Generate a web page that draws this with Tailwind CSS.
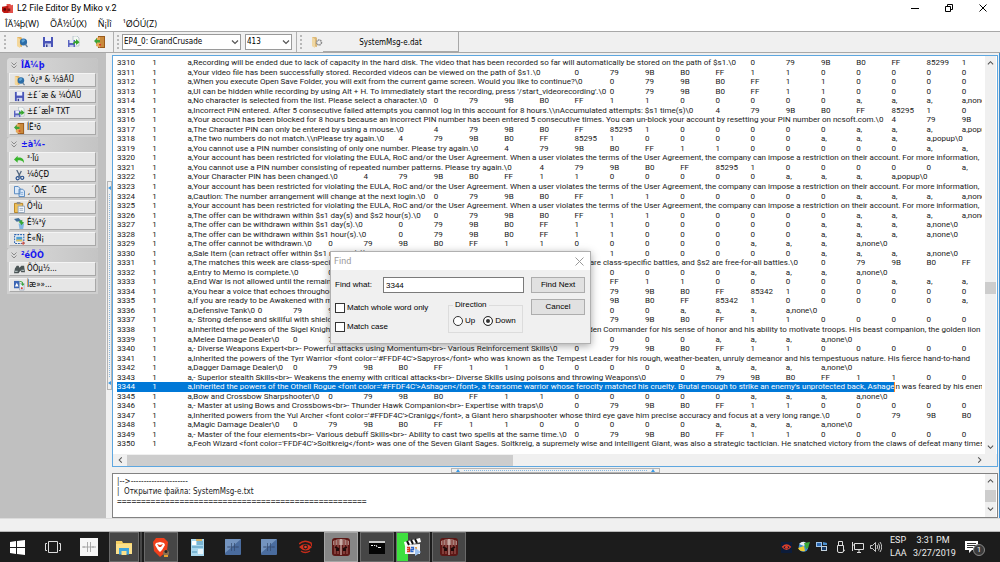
<!DOCTYPE html>
<html lang="en">
<head>
    <meta charset="UTF-8">
    <meta name="viewport" content="width=device-width, initial-scale=1.0">
    <title>L2 File Editor By Miko v.2</title>
    <script src="https://cdn.jsdelivr.net/npm/@tailwindcss/browser@4"></script>
</head>
<body class="h-screen overflow-hidden flex flex-col bg-[#f0f0f0] text-black text-[8px] leading-none font-['DejaVu_Sans_Condensed','DejaVu_Sans',sans-serif]">

    <!-- Shared icons -->
    <svg class="hidden">
        <symbol id="i-open" viewBox="0 0 12 12">
            <path d="M1 1h4l1 1v9l-5-1z" fill="#e3b566"/><path d="M1 1l3 2v9l-3-2z" fill="#f4d79b"/>
            <circle cx="7.5" cy="6" r="3.600" fill="#2c6da8"/><path d="M5.500 4.500c1-1.500 3-1.500 3.500-.5s-1 1-1.500 2-2 .5-2-1.500z" fill="#5fa6d8"/><path d="M9.500 8.500l2 2.500" stroke="#6b7f93" stroke-width="1.300"/>
        </symbol>
        <symbol id="i-save" viewBox="0 0 12 12">
            <path d="M1 1h10v10H1z" fill="#4a55b8"/><path d="M3 1h6v4H3z" fill="#eef0fb"/><path d="M3 7.500h6V11H3z" fill="#cfd4ee"/><path d="M4 8.500h1.500V11H4z" fill="#3a438f"/>
        </symbol>
        <symbol id="i-saveas" viewBox="0 0 12 12">
            <path d="M5 0h4l2 2v8H5z" fill="#f4f8f4" stroke="#8ea0b0" stroke-width=".5"/><path d="M0 4h7v7H0z" fill="#5a64c0"/><path d="M1.500 4h4v3h-4z" fill="#e6e9fa"/><path d="M1.500 9h4v2h-4z" fill="#c3c9ea"/>
            <path d="M5 9c0-3 1-4 3-4V3l3.500 3.200L8 9V7C6.500 7 6 8 5 9z" fill="#35a52c"/>
        </symbol>
        <symbol id="i-exit" viewBox="0 0 12 12">
            <path d="M4 0h7v12H4z" fill="#9a5a1c"/><path d="M5 1h5v10H5z" fill="#c98a3c"/><path d="M2 2l4-1v10.500L2 10z" fill="#e7a95a"/>
            <path d="M0 5l3-3v2h3v2.500H3V8z" fill="#3da338"/><path d="M5 8h2v1.500H5z" fill="#d8342a"/>
        </symbol>
        <symbol id="i-chev" viewBox="0 0 8 6">
            <path d="M1 1.500l3 3 3-3" fill="none" stroke="currentColor" stroke-width="1.200"/>
        </symbol>
        <symbol id="i-dbl" viewBox="0 0 6 7">
            <path d="M.5.500L3 3 5.500.500M.5 3.500L3 6l2.500-2.500" fill="none" stroke="#8a8a8a" stroke-width="1"/>
        </symbol>
        <symbol id="i-plate" viewBox="0 0 16 16">
            <rect width="16" height="16" rx="1" fill="#4a6c9e"/><path d="M0 0h16L0 14z" fill="#86a5cd" opacity=".7"/><path d="M2 8h12M6.500 4v8M9.500 4v8M4 7.500v1M12 7.500v1" stroke="#34496a" stroke-width=".7" fill="none"/>
        </symbol>
        <symbol id="i-l2" viewBox="0 0 18 18">
            <rect width="18" height="18" rx="3" fill="#5d1715"/><path d="M1 3q8-4 16 0v4H1z" fill="#a8837e"/><path d="M3 2v14M6 2v14M12 2v14M15 2v14" stroke="#8d4b45" stroke-width="1.500"/><path d="M9 1v16" stroke="#ead6d0" stroke-width="1"/><path d="M3 9l4 2M11 11l4-2M4 12h3M11 12h3" stroke="#1e0b0a" stroke-width="1.800"/>
        </symbol>
    </svg>

    <!-- Title bar -->
    <header class="h-4 shrink-0 bg-white flex items-center pl-[2px] font-[Roboto,sans-serif]">
        <svg class="w-[11px] h-[11px]" viewBox="0 0 12 12"><path d="M5 1h4l1 1.500 2-.5v9H5z" fill="#e2504a"/><path d="M0 4l7-1v8H2L0 9z" fill="#c01812"/><circle cx="3" cy="7" r="1.500" fill="#5c0705"/><path d="M6 6h3v3H6z" fill="#7f1410"/></svg>
        <h1 class="ml-1 text-[9px]">L2 File Editor By Miko v.2</h1>
        <div class="ml-auto flex text-black">
            <button aria-label="Minimize" class="w-[34px] h-4 flex items-center justify-center"><svg class="w-2 h-2" viewBox="0 0 8 8"><path d="M0 4.500h8" stroke="currentColor"/></svg></button>
            <button aria-label="Restore" class="w-[34px] h-4 flex items-center justify-center"><svg class="w-2 h-2" viewBox="0 0 8 8"><path d="M.5 2.500h5v5h-5zM2.500 2.500v-2h5v5h-2" fill="none" stroke="currentColor"/></svg></button>
            <button aria-label="Close" class="w-[34px] h-4 flex items-center justify-center"><svg class="w-2 h-2" viewBox="0 0 8 8"><path d="M.5.500l7 7M7.500.500l-7 7" stroke="currentColor"/></svg></button>
        </div>
    </header>

    <!-- Menu -->
    <nav class="h-[15px] shrink-0 bg-white flex items-center gap-[11px] pl-[5px] font-['Open_Sans',sans-serif] text-[9px]">
        <button>ÎÄ¼þ(W)</button>
        <button>ÕÂ½Ú(X)</button>
        <button>Ñ¡Ïî</button>
        <button>¹ØÓÚ(Z)</button>
    </nav>

    <!-- Toolbar -->
    <div class="h-[22px] shrink-0 bg-[#f0f0f0] border-y border-[#a8a8a8] flex items-center">
        <div class="ml-1 h-[14px] border-l-2 border-dotted border-[#b8b8b8]"></div>
        <div class="flex gap-[14px] ml-[10px]">
            <button aria-label="Open"><svg class="w-3 h-3"><use href="#i-open"/></svg></button>
            <button aria-label="Save"><svg class="w-3 h-3"><use href="#i-save"/></svg></button>
            <button aria-label="Save as"><svg class="w-3 h-3"><use href="#i-saveas"/></svg></button>
            <button aria-label="Exit"><svg class="w-3 h-3"><use href="#i-exit"/></svg></button>
        </div>
        <div class="ml-[7px] h-5 border-l border-[#b0b0b0]"></div>
        <div class="ml-[3px] h-[14px] border-l-2 border-dotted border-[#b8b8b8]"></div>
        <div class="relative ml-[3px] w-[119px]">
            <select aria-label="Chronicle" class="appearance-none block w-full h-4 bg-white border border-[#9a9a9a] pl-px leading-[14px]">
                <option>EP4_0: GrandCrusade</option>
            </select>
            <svg class="absolute right-[2px] top-[5px] w-2 h-[6px] text-[#555] pointer-events-none"><use href="#i-chev"/></svg>
        </div>
        <div class="relative ml-1 w-[47px]">
            <select aria-label="Protocol" class="appearance-none block w-full h-4 bg-white border border-[#9a9a9a] pl-px leading-[14px]">
                <option>413</option>
            </select>
            <svg class="absolute right-[2px] top-[5px] w-2 h-[6px] text-[#555] pointer-events-none"><use href="#i-chev"/></svg>
        </div>
        <div class="ml-[4px] h-5 border-l border-[#b0b0b0]"></div>
        <div class="ml-[3px] h-[14px] border-l-2 border-dotted border-[#b8b8b8]"></div>
        <button aria-label="File settings" class="ml-[9px]"><svg class="w-3 h-3" viewBox="0 0 12 12"><path d="M1 1h4l1 1v9l-5-1z" fill="#dcb878"/><path d="M1 1l3 2v9l-3-2z" fill="#f0d8a4"/><circle cx="8" cy="6.500" r="2.500" fill="#eee" stroke="#8c8c8c" stroke-width="1.500" stroke-dasharray="1.500 .6"/></svg></button>
        <button class="w-[136px] h-5 border-r border-b border-[#a8a8a8] flex items-center justify-center pt-[2px]">SystemMsg-e.dat</button>
    </div>

    <main class="flex-1 min-h-0 flex">
        <!-- Task panel -->
        <aside class="w-[106px] shrink-0 bg-[#c0c0c0] pl-[7px] pr-2 pt-[5px]">
            <section class="bg-[#cfcfcf] rounded-t pb-[2px]">
                <h2 class="h-[15px] flex items-center gap-1 pl-1 rounded-t bg-linear-to-r from-[#dadada] to-[#c4c4c4] text-[#1616f0] font-bold text-[9px]"><svg class="w-[6px] h-[7px]"><use href="#i-dbl"/></svg>ÎÄ¼þ</h2>
                <div class="flex flex-col gap-[2px] px-[2px]">
                    <button class="h-[14px] flex items-center gap-[2px] pl-1 bg-[#e6e6e6] border border-[#f4f4f4] border-b-[#a8a8a8] border-r-[#a8a8a8]"><svg class="w-[11px] h-[11px]"><use href="#i-open"/></svg>´ò¿ª &amp; ½âÃÜ</button>
                    <button class="h-[14px] flex items-center gap-[2px] pl-1 bg-[#e6e6e6] border border-[#f4f4f4] border-b-[#a8a8a8] border-r-[#a8a8a8]"><svg class="w-[11px] h-[11px]"><use href="#i-save"/></svg>±£´æ &amp; ¼ÓÃÜ</button>
                    <button class="h-[14px] flex items-center gap-[2px] pl-1 bg-[#e6e6e6] border border-[#f4f4f4] border-b-[#a8a8a8] border-r-[#a8a8a8]"><svg class="w-[11px] h-[11px]"><use href="#i-saveas"/></svg>±£´æÎª TXT</button>
                    <button class="h-[14px] flex items-center gap-[2px] pl-1 bg-[#e6e6e6] border border-[#f4f4f4] border-b-[#a8a8a8] border-r-[#a8a8a8]"><svg class="w-[11px] h-[11px]"><use href="#i-exit"/></svg>ÍË³ö</button>
                </div>
            </section>
            <section class="bg-[#cfcfcf] rounded-t pb-[2px]">
                <h2 class="h-[15px] flex items-center gap-1 pl-1 rounded-t bg-linear-to-r from-[#dadada] to-[#c4c4c4] text-[#1616f0] font-bold text-[9px]"><svg class="w-[6px] h-[7px]"><use href="#i-dbl"/></svg>±à¼-</h2>
                <div class="flex flex-col gap-[2px] px-[2px]">
                    <button class="h-[14px] flex items-center gap-[2px] pl-1 bg-[#e6e6e6] border border-[#f4f4f4] border-b-[#a8a8a8] border-r-[#a8a8a8]"><svg class="w-[11px] h-[11px]" viewBox="0 0 12 12"><path d="M0 6l4-4v2c4-.5 7 1 7 6-1.500-3-4-3.500-7-3v2.500z" fill="#38b52c"/></svg>³·Ïú</button>
                    <button class="h-[14px] flex items-center gap-[2px] pl-1 bg-[#e6e6e6] border border-[#f4f4f4] border-b-[#a8a8a8] border-r-[#a8a8a8]"><svg class="w-[11px] h-[11px]" viewBox="0 0 12 12"><path d="M3 0l4 8M8 1L5 7" stroke="#51657f" stroke-width="1.400"/><circle cx="4" cy="9" r="1.700" fill="none" stroke="#28508e" stroke-width="1.300"/><circle cx="9" cy="8.500" r="1.700" fill="none" stroke="#28508e" stroke-width="1.300"/></svg>¼ôÇÐ</button>
                    <button class="h-[14px] flex items-center gap-[2px] pl-1 bg-[#e6e6e6] border border-[#f4f4f4] border-b-[#a8a8a8] border-r-[#a8a8a8]"><svg class="w-[11px] h-[11px]" viewBox="0 0 12 12"><path d="M.5.500h4l2 2v6h-6zM5.500 3.500h4l2 2v6h-6z" fill="#dbe9f9" stroke="#4f83bd"/><path d="M7 7h3M7 9h3" stroke="#7fa9d6"/></svg>¸´ÖÆ</button>
                    <button class="h-[14px] flex items-center gap-[2px] pl-1 bg-[#e6e6e6] border border-[#f4f4f4] border-b-[#a8a8a8] border-r-[#a8a8a8]"><svg class="w-[11px] h-[11px]" viewBox="0 0 12 12"><path d="M.5 1.500h9v10h-9z" fill="#eebf57" stroke="#b27f1d"/><path d="M3 0h4v2.500H3z" fill="#8e8e8e"/><path d="M4.500 4.500h7v7h-7z" fill="#f5f8fd" stroke="#8da3bd"/><path d="M6 7h4M6 9h4" stroke="#9ab"/></svg>Õ³Ìù</button>
                    <button class="h-[14px] flex items-center gap-[2px] pl-1 bg-[#e6e6e6] border border-[#f4f4f4] border-b-[#a8a8a8] border-r-[#a8a8a8]"><svg class="w-[11px] h-[11px]" viewBox="0 0 12 12"><path d="M0 1l5-1 3 3-5 1z" fill="#3f6f98"/><path d="M5 6h6l-1 6H6z" fill="#7fb6e2"/><path d="M5 4l4-2v2l2 1-3 3-1-2z" fill="#35a737"/></svg>É¾³ý</button>
                    <button class="h-[14px] flex items-center gap-[2px] pl-1 bg-[#e6e6e6] border border-[#f4f4f4] border-b-[#a8a8a8] border-r-[#a8a8a8]"><svg class="w-[11px] h-[11px]" viewBox="0 0 12 12"><path d="M.7.700h10v9.600h-10z" fill="#f4f4f4" stroke="#2b63ae" stroke-width="1.200" stroke-dasharray="2 1"/><path d="M2.500 3h6.500v5H2.500z" fill="#4d9fd6"/><path d="M2.500 6h6.500v2H2.500z" fill="#e0c25a"/><path d="M10 8v4M8 10h4" stroke="#e04a32"/></svg>È«Ñ¡</button>
                </div>
            </section>
            <section class="bg-[#cfcfcf] rounded-t pb-[2px]">
                <h2 class="h-[14px] flex items-center gap-1 pl-1 rounded-t bg-linear-to-r from-[#dadada] to-[#c4c4c4] text-[#1616f0] font-bold text-[9px]"><svg class="w-[6px] h-[7px]"><use href="#i-dbl"/></svg>²éÕÒ</h2>
                <div class="flex flex-col gap-[2px] px-[2px]">
                    <button class="h-[14px] flex items-center gap-[2px] pl-1 bg-[#e6e6e6] border border-[#f4f4f4] border-b-[#a8a8a8] border-r-[#a8a8a8]"><svg class="w-[11px] h-[11px]" viewBox="0 0 12 12"><path d="M3 2h2l1 2 2-2h3l1 7H8L7 7l-2 3H0l1-5z" fill="#4b5556"/><path d="M1 8h3M8 7h3" stroke="#a9b4b5" stroke-width="1.500"/></svg>ÕÒµ½...</button>
                    <button class="h-[14px] flex items-center gap-[2px] pl-1 bg-[#e6e6e6] border border-[#f4f4f4] border-b-[#a8a8a8] border-r-[#a8a8a8]"><svg class="w-[11px] h-[11px]" viewBox="0 0 12 12"><path d="M0 1h6v8H0z" fill="#3c66b4"/><path d="M3 3l2 4H1z" fill="#fff"/><path d="M6 4h5v7H6z" fill="#e6eef7" stroke="#7e92ab" stroke-width=".6"/><path d="M6 1c3 0 4 1 4 3h1.500L9.500 6.500 7.500 4H9c0-1-1-2-3-2z" fill="#36a536"/><path d="M7.500 8h2v2h-2z" fill="#d34235"/></svg>Ìæ»»...</button>
                </div>
            </section>
        </aside>

        <!-- Vertical splitter -->
        <div class="w-[6px] shrink-0 flex flex-col justify-center items-center">
            <div class="w-[5px] h-[209px] border border-[#b4b4b4] flex flex-col items-center justify-between py-1">
                <span class="border-y-2 border-y-transparent border-r-[3px] border-r-[#3a9be8]"></span>
                <span class="flex-1 my-1 border-l border-dotted border-[#8bb9e0]"></span>
                <span class="border-y-2 border-y-transparent border-r-[3px] border-r-[#3a9be8]"></span>
            </div>
        </div>

        <div class="flex-1 min-w-0 flex flex-col pt-[2px] pr-[1px] border-r border-[#3f8fd0]">
            <!-- Editor -->
            <div class="flex-1 min-h-0 flex flex-col bg-white border border-[#5ea7e0]">
                <div class="flex-1 min-h-0 flex">
                    <div class="flex-1 min-w-0 pl-1 pr-[3px]">
                        <div id="lines" class="h-full overflow-hidden pt-[2px] pb-[5px] grid auto-rows-fr text-[#1a1a1a] font-[Roboto,sans-serif]"></div>
                    </div>
                    <div class="w-[11px] mr-px shrink-0 bg-[#f0f0f0] flex flex-col items-center py-1 text-[#505050]">
                        <svg class="w-[7px] h-[6px] rotate-180"><use href="#i-chev"/></svg>
                        <div class="flex-[217]"></div>
                        <div class="w-full h-3 bg-[#cdcdcd]"></div>
                        <div class="flex-[151]"></div>
                        <svg class="w-[7px] h-[6px]"><use href="#i-chev"/></svg>
                    </div>
                </div>
                <div class="h-3 shrink-0 bg-[#f0f0f0] flex items-center pl-1 pr-[14px] text-[#505050]">
                    <svg class="w-[7px] h-[6px] rotate-90"><use href="#i-chev"/></svg>
                    <div class="ml-[3px] flex-1 h-[11px]"><div class="w-5/11 h-full bg-[#cdcdcd]"></div></div>
                    <svg class="w-[7px] h-[6px] -rotate-90"><use href="#i-chev"/></svg>
                </div>
            </div>

            <!-- Horizontal splitter -->
            <div class="h-[6px] shrink-0 flex justify-center items-center">
                <div class="w-[209px] h-[5px] border border-[#b4b4b4] flex items-center justify-between px-1">
                    <span class="border-x-2 border-x-transparent border-b-[3px] border-b-[#3a9be8]"></span>
                    <span class="flex-1 mx-1 border-t border-dotted border-[#8bb9e0]"></span>
                    <span class="border-x-2 border-x-transparent border-b-[3px] border-b-[#3a9be8]"></span>
                </div>
            </div>

            <!-- Log -->
            <div class="h-[45px] shrink-0 bg-white border border-[#828282] flex">
                <pre class="flex-1 min-w-0 overflow-hidden pl-1 pt-[3px] leading-[10px] font-['DejaVu_Sans_Condensed','DejaVu_Sans',sans-serif] text-[#1a1a1a]">|--&gt;----------------------
|  Открытие файла: SystemMsg-e.txt
<span class="font-['Liberation_Mono',monospace] font-bold text-[#444]">====================================================</span></pre>
                <div class="w-[11px] mr-px shrink-0 bg-[#f0f0f0] flex flex-col items-center py-1 text-[#505050]">
                    <svg class="w-[7px] h-[6px] rotate-180"><use href="#i-chev"/></svg>
                    <div class="mt-[6px] w-full h-3 bg-[#cdcdcd]"></div>
                    <svg class="mt-1 w-[7px] h-[6px]"><use href="#i-chev"/></svg>
                </div>
            </div>
        </div>
    </main>

    <!-- Status bar -->
    <div class="h-[14px] shrink-0 border-t border-b border-t-[#dcdcdc] border-b-[#b8b8b8]"></div>

    <!-- Windows taskbar -->
    <footer class="h-[30px] shrink-0 bg-[#1c1c1c] text-[#eee] flex items-center font-[Roboto,sans-serif]">
        <button aria-label="Start" class="w-[35px] h-full flex items-center justify-center"><svg class="w-[15px] h-[15px]" viewBox="0 0 15 15"><path d="M0 2l6-1v6H0zM7 1l8-1v7H7zM0 8h6v6l-6-1zM7 8h8v7l-8-1z" fill="#fff"/></svg></button>
        <button aria-label="Task view" class="w-9 h-full flex items-center justify-center"><svg class="w-4 h-3" viewBox="0 0 16 12"><path d="M3.500.500h9v11h-9zM2 2.500H.5v7H2M14 2.500h1.500v7H14" fill="none" stroke="#ddd"/></svg></button>
        <button aria-label="Launcher" class="w-9 h-full flex items-center justify-center"><svg class="w-[18px] h-[18px]" viewBox="0 0 18 18"><path d="M0 0h18v18H0z" fill="#f6f6f6"/><path d="M2 9h14M7.500 4v10M10.500 4v10M4 8v2M13 8v2" stroke="#999" stroke-width=".8" fill="none"/></svg></button>
        <div class="w-9 h-full flex gap-[1px] pl-[2px] pr-[1px]">
            <button aria-label="File Explorer" class="flex-1 h-full bg-[#464646] border border-[#6a6a6a] flex items-center justify-center"><svg class="w-4 h-[15px]" viewBox="0 0 16 15"><path d="M0 1h6l1 2h9v11H0z" fill="#f5cf63"/><path d="M0 4h16v10H0z" fill="#fbe08a"/><path d="M3 8h10v6.500H3z" fill="#3fa3dc"/><path d="M5.500 11h5v4h-5z" fill="#fbe08a"/></svg></button>
            <span class="w-[2px] h-full bg-[#464646]"></span>
        </div>
        <button aria-label="Brave" class="w-[34px] mx-[1px] h-full bg-[#464646] border border-[#6a6a6a] flex items-center justify-center"><svg class="w-[18px] h-[19px]" viewBox="0 0 18 19"><path d="M4 0h8l4 4-1 9-7 6-6-6L1 4z" fill="#f0401c"/><path d="M4 5l4-1 4 1 1 2-3 5-2 2-2-2-3-5z" fill="#fff"/><path d="M5 6l3 1 3-1-2 3H7z" fill="#f0401c"/><circle cx="14" cy="15" r="3" fill="#8c7050"/><circle cx="14" cy="13.500" r="1.500" fill="#222"/><path d="M12 17h4v2h-4z" fill="#e6a02e"/></svg></button>
        <button aria-label="Notes" class="w-9 h-full flex items-center justify-center"><svg class="w-[13px] h-[17px]" viewBox="0 0 13 17"><path d="M0 0h13v17H0z" fill="#a9d8ef"/><path d="M1 2h4v4H1z" fill="#fff"/><path d="M6 3h6M6 5h6M1 8h11M1 13h5" stroke="#4d93b8"/><path d="M7 10h5v5H7z" fill="#e9f5fb"/><path d="M5 1h6" stroke="#e0a53a" stroke-width="1.500"/></svg></button>
        <button aria-label="L2 tool" class="w-9 h-full flex items-center justify-center"><svg class="w-4 h-4"><use href="#i-plate"/></svg></button>
        <button aria-label="L2 tool" class="w-9 h-full flex items-center justify-center"><svg class="w-4 h-4"><use href="#i-plate"/></svg></button>
        <button aria-label="Eye" class="w-9 h-full flex items-center justify-center"><svg class="w-[13px] h-[14px]" viewBox="0 0 13 14"><path d="M0 4q5-5 12-1l1 3" fill="none" stroke="#c52c1a" stroke-width="1.500"/><path d="M0 7q6-6 13 0-6 7-13 0z" fill="#d5301c"/><circle cx="6.500" cy="7" r="2.400" fill="#1c1c1c"/><circle cx="6.500" cy="7" r="1.300" fill="#e5402a"/><path d="M2 11q4 3 9 0" fill="none" stroke="#c52c1a" stroke-width="1.400"/></svg></button>
        <button aria-label="L2 File Editor" class="w-[34px] mx-[1px] h-full bg-[#868686] border border-[#a6a6a6] flex items-center justify-center"><svg class="w-[18px] h-[18px]"><use href="#i-l2"/></svg></button>
        <button aria-label="Command Prompt" class="w-[34px] mx-[1px] h-full bg-[#464646] border border-[#6a6a6a] flex items-center justify-center"><svg class="w-4 h-[13px]" viewBox="0 0 16 13"><path d="M0 0h16v13H0z" fill="#050505"/><path d="M0 0h16v2H0z" fill="#c9c9c9"/><path d="M2 4.500h2M5 4.500h1M7 4l1 2M9 6.500h3" stroke="#eee"/></svg></button>
        <button aria-label="Media Player Classic" class="w-[34px] mx-[1px] h-full bg-linear-to-r from-[#3fe03f] from-35% to-[#464646] to-35% border border-[#6a6a6a] flex items-center justify-center"><svg class="w-[18px] h-[18px]" viewBox="0 0 18 18"><path d="M1 7l15-1v10H1z" fill="#f4f4f4"/><path d="M0 4l16-4 1 4L1 8z" fill="#fff"/><path d="M3 3l2 4M7 2l2 4M11 1l2 4" stroke="#111" stroke-width="2"/><path d="M3 9.500h2.500v4H3M3 11.500h2" stroke="#d8361f" fill="none" stroke-width="1.300"/><path d="M7 9.500h2.500v2H7v2h2.500" stroke="#2b63c8" fill="none" stroke-width="1.300"/><path d="M12 9v5" stroke="#e08a1a" stroke-width="1.500"/><path d="M11 10l6 4-6 4z" fill="#9cc0ee"/></svg></button>
        <button aria-label="L2 game" class="w-[34px] mx-[1px] h-full bg-[#464646] border border-[#6a6a6a] flex items-center justify-center"><svg class="w-[18px] h-[18px]"><use href="#i-l2"/></svg></button>

        <div class="ml-auto flex items-center gap-[6px]">
            <svg class="w-[11px] h-[11px]" viewBox="0 0 11 11"><path d="M0 0h11v11H0z" fill="#0c1c3a"/><path d="M1.500 5q4-4 8 0-4 5-8 0z" fill="none" stroke="#e0402a" stroke-width="1.200"/><circle cx="5.500" cy="5.300" r="1.500" fill="#e0402a"/></svg>
            <svg class="w-3 h-3" viewBox="0 0 12 12"><circle cx="5.500" cy="6" r="4.800" fill="#3d8ed0"/><path d="M1 3q4-4 7-1L6 5z" fill="#e9eef2"/><path d="M0 7l6-2 1 5q-5 1-7-3z" fill="#f1ce33"/><path d="M6 2l6-1-2 6-2 1z" fill="#3aa839"/></svg>
            <svg class="w-3 h-3" viewBox="0 0 12 12"><path d="M0 1h6v5H0z" fill="#9fc4e8"/><path d="M1 2h4v3H1z" fill="#2a66b0"/><path d="M5 5h6v5H5z" fill="#c2d0dc"/><path d="M6 6h4v3H6z" fill="#173a66"/><path d="M7 1l4 1v2H7z" fill="#4b90d0"/></svg>
            <svg class="w-3 h-3" viewBox="0 0 12 12"><path d="M4.500 4V.500h4V4M3.500 4.500h6V10q0 1.500-1.500 1.500H5q-1.500 0-1.500-1.500zM9 10l2-1" fill="none" stroke="#ddd"/></svg>
            <svg class="w-3 h-3" viewBox="0 0 12 12"><path d="M2.500 2.500h9v6h-9zM5 11.500h4M7 9v2M.5 1v3h2M.5 4v6" fill="none" stroke="#ddd"/></svg>
            <svg class="w-3 h-3" viewBox="0 0 12 12"><path d="M.5 4.500h2l3-3v9l-3-3h-2zM7 4q1.500 2 0 4M8.500 2.500q2.500 3.500 0 7M10 1q3.500 5 0 10" fill="none" stroke="#ddd" stroke-width=".9"/></svg>
            <div class="ml-[2px] w-4 text-center text-[9px] leading-[13px]">ESP<br>LAA</div>
            <div class="ml-[1px] w-10 text-center text-[9px] leading-[13px] whitespace-nowrap">3:31 PM<br>3/27/2019</div>
            <button aria-label="Notifications" class="relative ml-[6px] mr-[15px] w-5 h-[18px]">
                <svg class="w-[13px] h-3" viewBox="0 0 13 12"><path d="M0 0h13v9H7l-3 3V9H0z" fill="#fff"/><path d="M2 2.500h9M2 4.500h9M2 6.500h6" stroke="#333"/></svg>
                <span class="absolute right-0 bottom-0 w-3 h-3 rounded-full bg-[#3a3a3a] border border-[#8a8a8a] flex items-center justify-center">1</span>
            </button>
        </div>
    </footer>

    <!-- Find dialog -->
    <form class="absolute left-[330px] top-[251px] w-[261px] bg-[#f0f0f0] border border-[#b0b0b0] shadow-[0_2px_8px_rgba(0,0,0,0.35)] font-['Liberation_Sans',sans-serif]">
        <div class="h-[18px] bg-white flex items-center justify-between pl-[3px] pr-[6px] text-[#9a9a9a] text-[9px] font-[Roboto,sans-serif]">
            Find
            <button type="button" aria-label="Close dialog"><svg class="w-[9px] h-[9px]" viewBox="0 0 9 9"><path d="M.5.500l8 8M8.500.500l-8 8" stroke="#999"/></svg></button>
        </div>
        <div class="flex pl-1 pr-[5px] pt-[7px] pb-[10px]">
            <div class="flex-1">
                <div class="flex items-center">
                    <label for="what" class="w-[48px]">Find what:</label>
                    <input id="what" type="text" value="3344" class="w-[141px] h-4 bg-white border border-[#7a7a7a] pl-[2px]">
                </div>
                <div class="flex justify-between mr-[8px] mt-2">
                    <div class="flex flex-col gap-[9px] pt-[2px]">
                        <label class="flex items-center gap-[2px]"><input type="checkbox" class="appearance-none w-[10px] h-[10px] bg-white border border-[#333]">Match whole word only</label>
                        <label class="flex items-center gap-[2px]"><input type="checkbox" class="appearance-none w-[10px] h-[10px] bg-white border border-[#333]">Match case</label>
                    </div>
                    <fieldset class="w-[75px] h-8 border border-[#dcdcdc] flex pl-1">
                        <legend class="px-[2px]">Direction</legend>
                        <div class="flex items-center gap-2">
                            <label class="flex items-center gap-[2px]"><input type="radio" name="dir" class="appearance-none w-[10px] h-[10px] rounded-full bg-white border border-[#333] checked:bg-[#333] checked:shadow-[inset_0_0_0_2px_white]">Up</label>
                            <label class="flex items-center gap-[2px]"><input type="radio" name="dir" checked class="appearance-none w-[10px] h-[10px] rounded-full bg-white border border-[#333] checked:bg-[#333] checked:shadow-[inset_0_0_0_2px_white]">Down</label>
                        </div>
                    </fieldset>
                </div>
            </div>
            <div class="w-[54px] flex flex-col gap-[6px]">
                <button type="button" class="h-4 bg-[#e1e1e1] border border-[#adadad]">Find Next</button>
                <button type="button" class="h-4 bg-[#e1e1e1] border border-[#adadad]">Cancel</button>
            </div>
        </div>
    </form>

    <script>
        // line text, tab column of the first value, values
        const NONE = '0 79 9B B0 FF 1 1 0 0 0 0 0 a, a, a, a,none\\0';
        const POPUP = '4 79 9B B0 FF 85295 1 0 0 0 0 0 a, a, a, a,popup\\0';
        const SHORT_POPUP = '4 79 9B B0 FF 1 1 0 0 0 0 0 a, a, a, a,popup\\0';
        const VOICE = '0 79 9B B0 FF 85342 1 0 0 0 0 0 a, a, a, a,none\\0';
        const EULA = 'Your account has been restricted for violating the EULA, RoC and/or the User Agreement. When a user violates the terms of the User Agreement, the company can impose a restriction on their account. For more information,';

        const rows = [
            ['Recording will be ended due to lack of capacity in the hard disk. The video that has been recorded so far will automatically be stored on the path of $s1.\\0', 18, '0 79 9B B0 FF 85299 1'],
            ['Your video file has been successfully stored. Recorded videos can be viewed on the path of $s1.\\0', 13, NONE],
            ['When you execute Open Save Folder, you will exit from the current game screen. Would you like to continue?\\0', 14, NONE],
            ["UI can be hidden while recording by using Alt + H. To immediately start the recording, press '/start_videorecording'.\\0", 14, NONE],
            ['No character is selected from the list. Please select a character.\\0', 9, NONE],
            ['Incorrect PIN entered. After 5 consecutive failed attempts you cannot log in this account for 8 hours.\\\\nAccumulated attempts: $s1 time(s)\\0', 17, POPUP],
            ['Your account has been blocked for 8 hours because an incorrect PIN number has been entered 5 consecutive times. You can un-block your account by resetting your PIN number on ncsoft.com.\\0', 22, POPUP],
            ['The Character PIN can only be entered by using a mouse.\\0', 9, POPUP],
            ['The two numbers do not match.\\\\nPlease try again.\\0', 8, POPUP],
            ['You cannot use a PIN number consisting of only one number. Please try again.\\0', 11, SHORT_POPUP],
            [EULA],
            ['You cannot use a PIN number consisting of repeated number patterns. Please try again.\\0', 12, POPUP],
            ['Your Character PIN has been changed.\\0', 7, SHORT_POPUP],
            [EULA],
            ['Caution: The number arrangement will change at the next login.\\0', 9, NONE],
            [EULA],
            ['The offer can be withdrawn within $s1 day(s) and $s2 hour(s).\\0', 9, NONE],
            ['The offer can be withdrawn within $s1 day(s).\\0', 8, NONE],
            ['The offer can be withdrawn within $s1 hour(s).\\0', 8, NONE],
            ['The offer cannot be withdrawn.\\0', 6, NONE],
            ['Sale Item (can retract offer within $s1 minute(s))\\0', 8, NONE],
            ['The matches this week are class-specific battles. The matches in week number $s1 of this current game month are class-specific battles, and $s2 are free-for-all battles.\\0', 20, NONE],
            ['Entry to Memo is complete.\\0', 6, NONE],
            ['End War is not allowed until the remaining time is over.\\0', 10, NONE],
            ['You hear a voice that echoes throughout the world.\\0', 13, VOICE],
            ['If you are ready to be Awakened with me, come to me.\\0', 12, VOICE],
            ['Defensive Tank\\0', 4, NONE],
            ['- Strong defense and skillful with shields<br>- Protects allies\\0', 13, NONE],
            ["Inherited the powers of the Sigel Knight <font color='#FFDF4C'>Abelius</font>, who was long praised as the Golden Commander for his sense of honor and his ability to motivate troops. His beast companion, the golden lion Kelcion"],
            ['Melee Damage Dealer\\0', 5, NONE],
            ['- Diverse Weapons Expert<br>- Powerful attacks using Momentum<br>- Various Reinforcement Skills\\0', 13, NONE],
            ["Inherited the powers of the Tyrr Warrior <font color='#FFDF4C'>Sapyros</font> who was known as the Tempest Leader for his rough, weather-beaten, unruly demeanor and his tempestuous nature. His fierce hand-to-hand"],
            ['Dagger Damage Dealer\\0', 5, NONE],
            ['- Superior stealth Skills<br>- Weakens the enemy with critical attacks<br>- Diverse Skills using poisons and throwing Weapons\\0', 16, NONE],
            ["Inherited the powers of the Othell Rogue <font color='#FFDF4C'>Ashagen</font>, a fearsome warrior whose ferocity matched his cruelty. Brutal enough to strike an enemy's unprotected back, Ashage|n was feared by his enemies"],
            ['Bow and Crossbow Sharpshooter\\0', 6, NONE],
            ['- Master at using Bows and Crossbows<br>- Thunder Hawk Companion<br>- Expertise with traps\\0', 13, NONE],
            ["Inherited powers from the Yul Archer <font color='#FFDF4C'>Cranigg</font>, a Giant hero sharpshooter whose third eye gave him precise accuracy and focus at a very long range.\\0", 21, NONE],
            ['Magic Damage Dealer\\0', 5, NONE],
            ['- Master of the four elements<br>- Various debuff Skills<br>- Ability to cast two spells at the same time.\\0', 13, NONE],
            ["Feoh Wizard <font color='FFDF4C'>Soltkreig</font> was one of the Seven Giant Sages. Soltkreig, a supremely wise and intelligent Giant, was also a strategic tactician. He snatched victory from the claws of defeat many times"]
        ];

        const COLUMNS = 25;
        const selectedId = 3344;
        const lines = document.getElementById('lines');

        function addCell(row, text, column, classes) {
            const cell = document.createElement('span');
            cell.className = classes;
            cell.style.gridColumnStart = column + 1;
            cell.textContent = text;
            row.appendChild(cell);
            return cell;
        }

        rows.forEach(([text, start, values], i) => {
            const id = 3310 + i;
            const selected = id === selectedId;
            const row = document.createElement('div');
            row.className = 'w-[880px] min-h-0 grid grid-cols-25 grid-rows-1 whitespace-nowrap leading-[9px]';
            const fill = selected ? 'row-start-1 bg-[#0078d7] text-white' : 'row-start-1';
            addCell(row, id, 0, fill);
            addCell(row, '1', 1, fill);
            const [marked, rest] = text.split('|');
            const body = addCell(row, '', 2, 'row-start-1 w-0 flex');
            const head = document.createElement('span');
            head.className = selected ? 'shrink-0 bg-[#0078d7] text-white border-r border-[#ff8728]' : 'shrink-0';
            head.textContent = 'a,' + marked;
            body.append(head, rest || '');
            if (values) {
                values.split(' ').slice(0, COLUMNS - start).forEach((value, n) => {
                    addCell(row, value, start + n, 'row-start-1');
                });
            }
            lines.appendChild(row);
        });
    </script>
</body>
</html>
